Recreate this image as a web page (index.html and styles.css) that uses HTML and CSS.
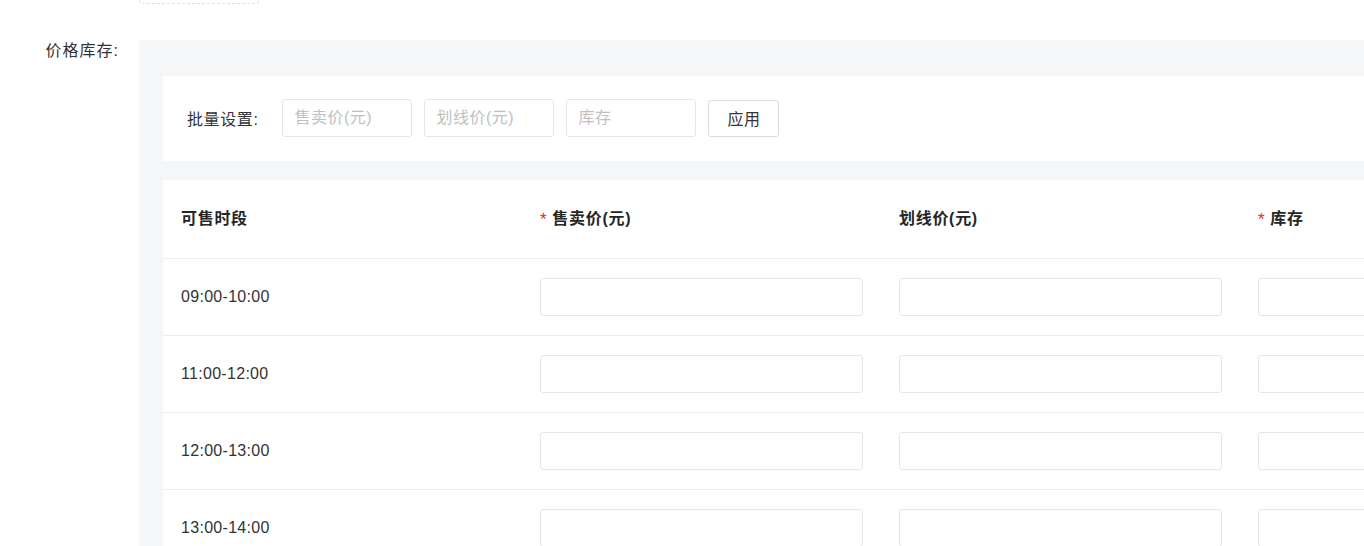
FILE: index.html
```html
<!DOCTYPE html>
<html lang="zh-CN">
<head>
    <meta charset="UTF-8">
    <meta name="viewport" content="width=device-width, initial-scale=1.0">
    <title>价格库存</title>
    <link rel="stylesheet" href="styles.css">
</head>
<body>
    <div class="page">
        <!-- upload box from the previous form item, mostly scrolled off -->
        <div class="upload-row">
            <div class="upload-box"></div>
        </div>

        <div class="form-item">
            <div class="form-label">价格库存:</div>
            <div class="stock-panel">
                <!-- Batch setting -->
                <div class="batch-card">
                    <span class="batch-label">批量设置:</span>
                    <input type="text" class="batch-input" placeholder="售卖价(元)">
                    <input type="text" class="batch-input" placeholder="划线价(元)">
                    <input type="text" class="batch-input" placeholder="库存">
                    <button type="button" class="btn">应用</button>
                </div>

                <!-- Time slot table -->
                <table class="sku-table">
                    <colgroup>
                        <col class="col">
                        <col class="col">
                        <col class="col">
                        <col class="col">
                    </colgroup>
                    <thead>
                        <tr>
                            <th>可售时段</th>
                            <th><span class="required">*</span>售卖价(元)</th>
                            <th>划线价(元)</th>
                            <th><span class="required">*</span>库存</th>
                        </tr>
                    </thead>
                    <tbody>
                        <tr>
                            <td>09:00-10:00</td>
                            <td><input type="text" class="cell-input"></td>
                            <td><input type="text" class="cell-input"></td>
                            <td><input type="text" class="cell-input"></td>
                        </tr>
                        <tr>
                            <td>11:00-12:00</td>
                            <td><input type="text" class="cell-input"></td>
                            <td><input type="text" class="cell-input"></td>
                            <td><input type="text" class="cell-input"></td>
                        </tr>
                        <tr>
                            <td>12:00-13:00</td>
                            <td><input type="text" class="cell-input"></td>
                            <td><input type="text" class="cell-input"></td>
                            <td><input type="text" class="cell-input"></td>
                        </tr>
                        <tr>
                            <td>13:00-14:00</td>
                            <td><input type="text" class="cell-input"></td>
                            <td><input type="text" class="cell-input"></td>
                            <td><input type="text" class="cell-input"></td>
                        </tr>
                    </tbody>
                </table>
            </div>
        </div>
    </div>
</body>
</html>
```

FILE: styles.css
```css
:root {
    --text-color: #333;
    --placeholder-color: #bfbfbf;
    --border-color: #e4e6e8;
    --line-color: #ebedf0;
    --panel-bg: #f5f6f7;
    --required-color: #f5222d;
}

* {
    margin: 0;
    padding: 0;
    box-sizing: border-box;
    font-family: 'Liberation Sans', 'Noto Sans CJK SC', sans-serif;
}

body {
    background-color: white;
    color: var(--text-color);
    font-size: 16px;
    overflow: hidden;
}

.page {
    width: 1364px;
    height: 546px;
    overflow: hidden;
}

.upload-row {
    padding-left: 139px;
    height: 4px;
    overflow: hidden;
    margin-bottom: 36px;
}

.upload-box {
    width: 120px;
    height: 120px;
    margin-top: -116px;
    border: 1px dashed #dcdee2;
    border-radius: 4px;
}

.form-item {
    display: flex;
    align-items: flex-start;
}

.form-label {
    flex: 0 0 139px;
    padding-right: 20px;
    text-align: right;
    line-height: 22px;
    letter-spacing: 1px;
}

.stock-panel {
    flex: 0 0 auto;
    background-color: var(--panel-bg);
    padding: 36px 24px 40px;
}

.batch-card {
    display: flex;
    align-items: center;
    gap: 12px;
    height: 85px;
    padding: 0 24px 1px;
    background-color: white;
    margin-bottom: 19px;
}

.batch-label {
    margin-right: 12px;
    letter-spacing: 0.6px;
}

.batch-input {
    width: 130px;
    height: 38px;
    padding: 0 11px;
    border: 1px solid var(--border-color);
    border-radius: 3px;
    font-size: 16px;
    letter-spacing: 0.5px;
    color: var(--text-color);
    outline: none;
}

.batch-input::placeholder {
    color: var(--placeholder-color);
}

.btn {
    width: 71px;
    height: 37px;
    background-color: white;
    border: 1px solid #dadcdf;
    border-radius: 3px;
    font-size: 16px;
    letter-spacing: 0.5px;
    color: var(--text-color);
    cursor: pointer;
}

.sku-table {
    background-color: white;
    border-collapse: collapse;
    table-layout: fixed;
    width: 1436px;
}

.col {
    width: 359px;
}

.sku-table th,
.sku-table td {
    padding: 0 18px;
    text-align: left;
    vertical-align: middle;
    border-bottom: 1px solid var(--line-color);
}

.sku-table th {
    height: 78px;
    padding-bottom: 3px;
    font-weight: bold;
    letter-spacing: 0.7px;
    color: #262626;
}

.sku-table td {
    height: 77px;
    letter-spacing: 0.3px;
}

.required {
    color: var(--required-color);
    font-weight: normal;
    font-size: 17px;
    margin-right: 5px;
    position: relative;
    top: 1px;
}

.cell-input {
    display: block;
    width: 100%;
    height: 38px;
    border: 1px solid var(--border-color);
    border-radius: 3px;
    padding: 0 11px;
    font-size: 16px;
    outline: none;
}
```
